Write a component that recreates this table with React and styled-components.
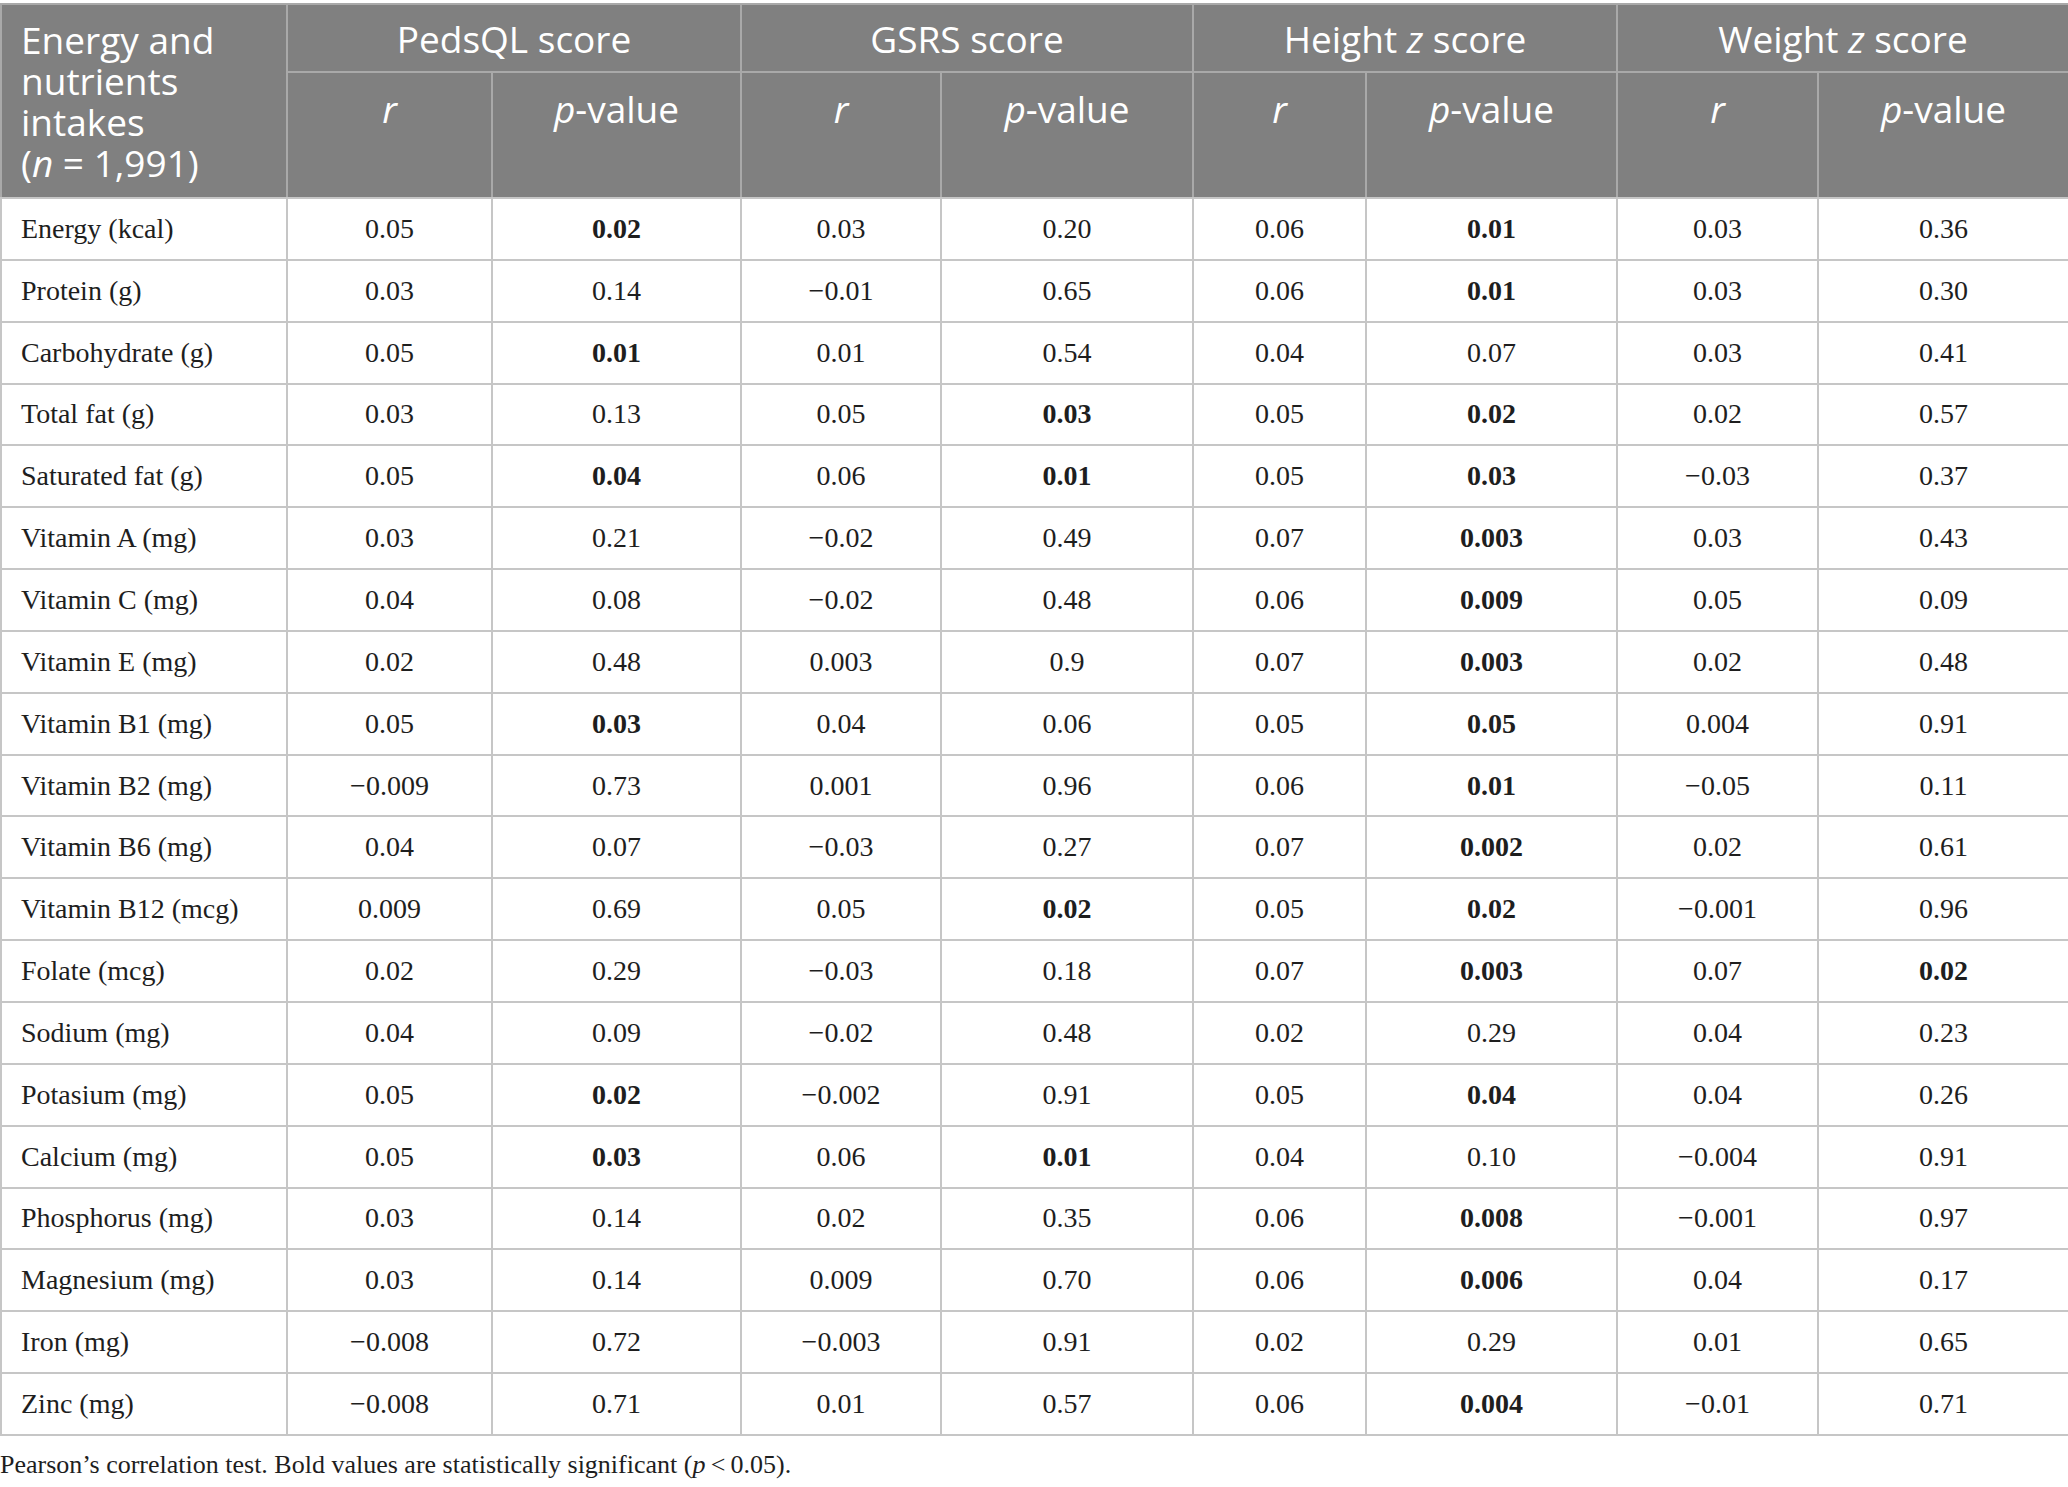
import React from 'react'
import styled, { createGlobalStyle } from 'styled-components'

const GlobalStyle = createGlobalStyle`
  html, body {
    margin: 0;
    padding: 0;
    background: #ffffff;
  }
`

const groups = [
  { label: 'PedsQL score' },
  { label: 'GSRS score' },
  { label: 'Height', italic: 'z', rest: 'score' },
  { label: 'Weight', italic: 'z', rest: 'score' },
]

const widths = [286, 205, 249, 200, 252, 173, 251, 201, 251]

// '*' marks a bold (significant) value
const rows = [
  ['Energy (kcal)', '0.05', '*0.02', '0.03', '0.20', '0.06', '*0.01', '0.03', '0.36'],
  ['Protein (g)', '0.03', '0.14', '−0.01', '0.65', '0.06', '*0.01', '0.03', '0.30'],
  ['Carbohydrate (g)', '0.05', '*0.01', '0.01', '0.54', '0.04', '0.07', '0.03', '0.41'],
  ['Total fat (g)', '0.03', '0.13', '0.05', '*0.03', '0.05', '*0.02', '0.02', '0.57'],
  ['Saturated fat (g)', '0.05', '*0.04', '0.06', '*0.01', '0.05', '*0.03', '−0.03', '0.37'],
  ['Vitamin A (mg)', '0.03', '0.21', '−0.02', '0.49', '0.07', '*0.003', '0.03', '0.43'],
  ['Vitamin C (mg)', '0.04', '0.08', '−0.02', '0.48', '0.06', '*0.009', '0.05', '0.09'],
  ['Vitamin E (mg)', '0.02', '0.48', '0.003', '0.9', '0.07', '*0.003', '0.02', '0.48'],
  ['Vitamin B1 (mg)', '0.05', '*0.03', '0.04', '0.06', '0.05', '*0.05', '0.004', '0.91'],
  ['Vitamin B2 (mg)', '−0.009', '0.73', '0.001', '0.96', '0.06', '*0.01', '−0.05', '0.11'],
  ['Vitamin B6 (mg)', '0.04', '0.07', '−0.03', '0.27', '0.07', '*0.002', '0.02', '0.61'],
  ['Vitamin B12 (mcg)', '0.009', '0.69', '0.05', '*0.02', '0.05', '*0.02', '−0.001', '0.96'],
  ['Folate (mcg)', '0.02', '0.29', '−0.03', '0.18', '0.07', '*0.003', '0.07', '*0.02'],
  ['Sodium (mg)', '0.04', '0.09', '−0.02', '0.48', '0.02', '0.29', '0.04', '0.23'],
  ['Potasium (mg)', '0.05', '*0.02', '−0.002', '0.91', '0.05', '*0.04', '0.04', '0.26'],
  ['Calcium (mg)', '0.05', '*0.03', '0.06', '*0.01', '0.04', '0.10', '−0.004', '0.91'],
  ['Phosphorus (mg)', '0.03', '0.14', '0.02', '0.35', '0.06', '*0.008', '−0.001', '0.97'],
  ['Magnesium (mg)', '0.03', '0.14', '0.009', '0.70', '0.06', '*0.006', '0.04', '0.17'],
  ['Iron (mg)', '−0.008', '0.72', '−0.003', '0.91', '0.02', '0.29', '0.01', '0.65'],
  ['Zinc (mg)', '−0.008', '0.71', '0.01', '0.57', '0.06', '*0.004', '−0.01', '0.71'],
]

const App = () => (
  <Page>
    <GlobalStyle />
    <Table>
      <colgroup>
        {widths.map((w, i) => (
          <col key={i} style={{ width: w }} />
        ))}
      </colgroup>
      <thead>
        <GroupRow>
          <StubHead rowSpan={2}>
            <HeadLine>Energy and</HeadLine>
            <HeadLine>nutrients</HeadLine>
            <HeadLine>intakes</HeadLine>
            <HeadLine>
              (<i>n</i> = 1,991)
            </HeadLine>
          </StubHead>
          {groups.map(g => (
            <GroupHead key={g.label} colSpan={2}>
              {g.label}
              {g.italic && (
                <>
                  {' '}
                  <i>{g.italic}</i> {g.rest}
                </>
              )}
            </GroupHead>
          ))}
        </GroupRow>
        <SubRow>
          {groups.map(g => (
            <React.Fragment key={g.label}>
              <SubHead>
                <i>r</i>
              </SubHead>
              <SubHead>
                <i>p</i>-value
              </SubHead>
            </React.Fragment>
          ))}
        </SubRow>
      </thead>
      <tbody>
        {rows.map(([name, ...values]) => (
          <BodyRow key={name}>
            <StubCell>{name}</StubCell>
            {values.map((v, i) => (
              <Cell key={i} $bold={v.startsWith('*')}>
                {v.replace('*', '')}
              </Cell>
            ))}
          </BodyRow>
        ))}
      </tbody>
    </Table>
    <Footnote>
      Pearson’s correlation test. Bold values are statistically significant (<i>p</i>
      {'\u2009<\u2009'}0.05).
    </Footnote>
  </Page>
)

const Page = styled.div`
  width: 2068px;
  padding-top: 3px;
`

const Table = styled.table`
  width: 2068px;
  table-layout: fixed;
  border-collapse: collapse;
  border: 2px solid #c6c6c6;
`

const headBase = `
  background: #808080;
  color: #ffffff;
  font-family: 'Open Sans', 'Noto Sans', sans-serif;
  font-size: 37px;
  font-weight: 400;
  line-height: 41px;
  border: 2px solid #a9a9a9;
  i {
    font-style: italic;
  }
`

const GroupRow = styled.tr`
  height: 68px;
`

const SubRow = styled.tr`
  height: 126px;
`

const StubHead = styled.th`
  ${headBase};
  text-align: left;
  vertical-align: top;
  padding: 19px 8px 0 19px;
  border-bottom-color: #c6c6c6;
`

const HeadLine = styled.div`
  display: block;
  height: 31px;
  line-height: 31px;
  margin-bottom: 10px;
  white-space: nowrap;
`

const GroupHead = styled.th`
  ${headBase};
  text-align: center;
  vertical-align: middle;
  padding: 0 8px;
  white-space: nowrap;
`

const SubHead = styled.th`
  ${headBase};
  text-align: center;
  vertical-align: top;
  padding: 15px 8px 0;
  border-bottom-color: #c6c6c6;
`

const BodyRow = styled.tr`
  height: 61.85px;
`

const cellBase = `
  font-family: 'Liberation Serif', 'Times New Roman', serif;
  font-size: 28px;
  color: #1e1e1e;
  vertical-align: middle;
  border: 2px solid #c6c6c6;
  padding: 0 8px;
`

const StubCell = styled.td`
  ${cellBase};
  text-align: left;
  padding-left: 19px;
  white-space: nowrap;
`

const Cell = styled.td`
  ${cellBase};
  text-align: center;
  font-weight: ${props => (props.$bold ? 700 : 400)};
`

const Footnote = styled.p`
  margin: 14px 0 0;
  font-family: 'Liberation Serif', 'Times New Roman', serif;
  font-size: 26px;
  color: #1e1e1e;

  i {
    font-style: italic;
  }
`

export default App
